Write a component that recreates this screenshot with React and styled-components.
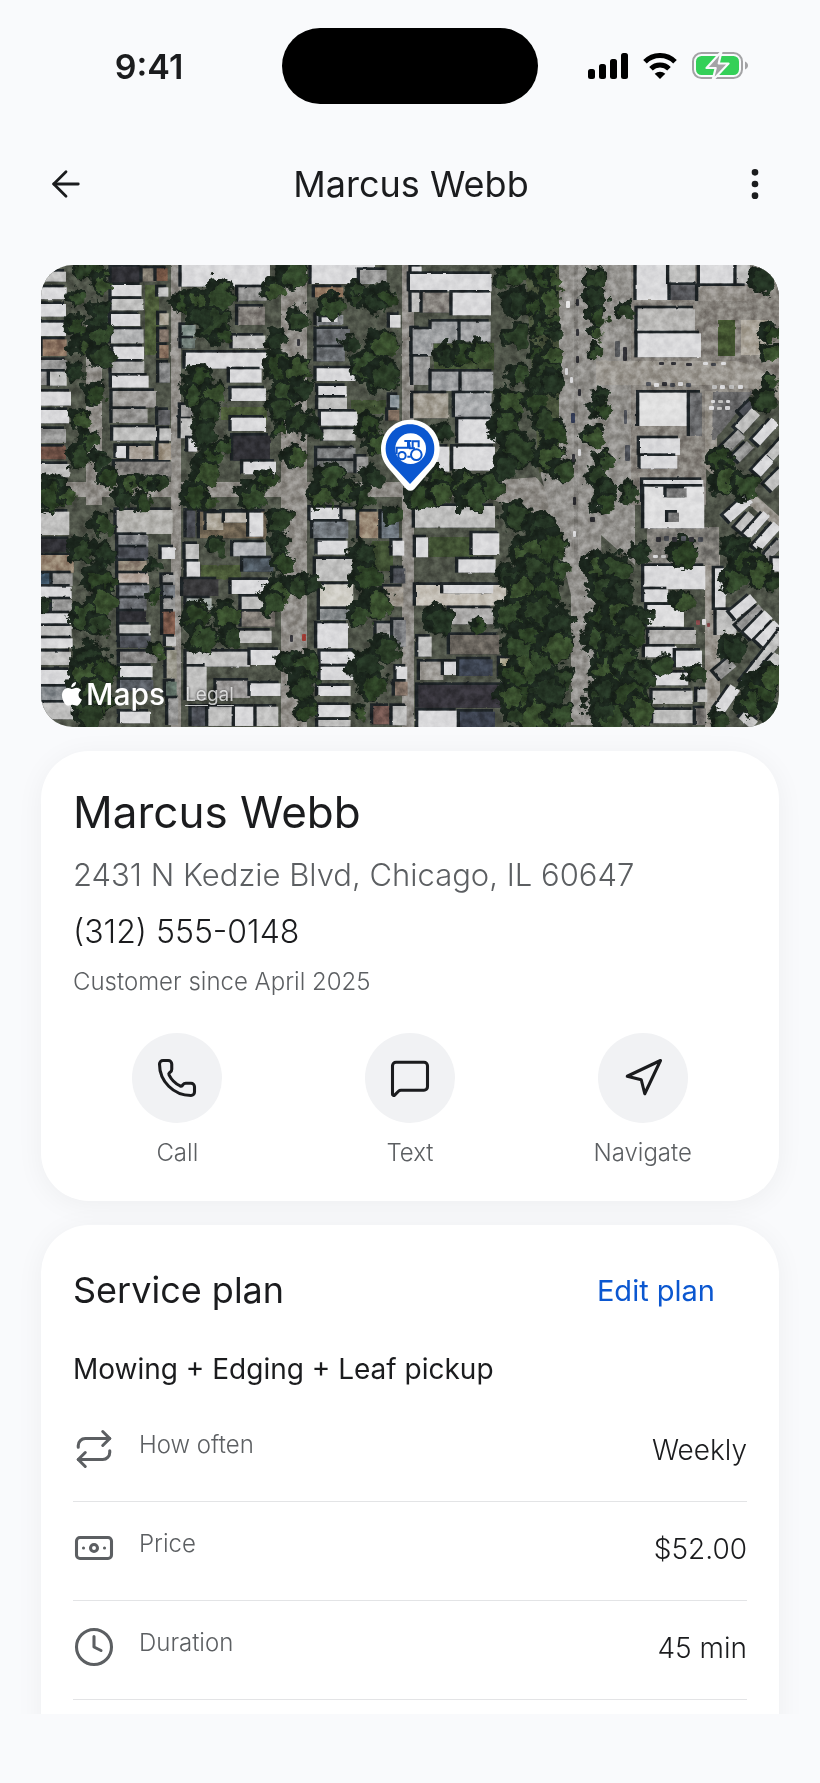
import React from "react";
import styled, { createGlobalStyle } from 'styled-components';
import { ArrowLeft, EllipsisVertical, Phone, MessageSquare, Navigation, Repeat, Banknote, Clock } from 'lucide-react';

const ACTIONS = [
    { label: 'Call', Icon: Phone },
    { label: 'Text', Icon: MessageSquare },
    { label: 'Navigate', Icon: Navigation },
];

const PLAN_ROWS = [
    { label: 'How often', value: 'Weekly', Icon: Repeat },
    { label: 'Price', value: '$52.00', Icon: Banknote },
    { label: 'Duration', value: '45 min', Icon: Clock },
];

export default function App() {
    return (
        <>
            <GlobalStyle />
            <Screen>
                <StatusBar />
                <TopBar>
                    <IconButton aria-label="Back"><ArrowLeft size={42} strokeWidth={1.6} /></IconButton>
                    <TopTitle>Marcus Webb</TopTitle>
                    <IconButton aria-label="More options"><EllipsisVertical size={40} /></IconButton>
                </TopBar>
                <Content>
                    <MapCard>
                        <SatelliteMap />
                        <MapCredits>
                            <AppleLogo viewBox="0 0 20 24" aria-hidden="true">
                                <path d="M14 0c.2 2.800-2.200 5.400-4.700 5.300C9 2.700 11.400.2 14 0zM9.900 7c1.100 0 2.500-1.300 4.600-1.300 1.900 0 3.700 1 4.700 2.500-4 2.300-3.300 7.700.7 9.300-.9 2.700-3.100 6.300-5.300 6.300-1.500 0-2.300-1-4.300-1s-2.800 1-4.200 1C3.700 23.800 0 18.700 0 13.500 0 8.600 3 5.900 6 5.900c1.700 0 3 1.100 3.900 1.100z" />
                            </AppleLogo>
                            <MapsWord>Maps</MapsWord>
                            <LegalLink href="#legal">Legal</LegalLink>
                        </MapCredits>
                    </MapCard>

                    <Card>
                        <Name>Marcus Webb</Name>
                        <Address>2431 N Kedzie Blvd, Chicago, IL 60647</Address>
                        <PhoneNumber>(312) 555-0148</PhoneNumber>
                        <Since>Customer since April 2025</Since>
                        <Actions>
                            {ACTIONS.map(({ label, Icon }) => (
                                <Action key={label}>
                                    <ActionCircle><Icon size={42} strokeWidth={1.75} /></ActionCircle>
                                    {label}
                                </Action>
                            ))}
                        </Actions>
                    </Card>

                    <PlanCard>
                        <PlanHead>
                            <PlanTitle>Service plan</PlanTitle>
                            <EditButton>Edit plan</EditButton>
                        </PlanHead>
                        <PlanName>Mowing + Edging + Leaf pickup</PlanName>
                        <PlanRows>
                            {PLAN_ROWS.map(({ label, value, Icon }) => (
                                <PlanRow key={label}>
                                    <dt><Icon size={42} strokeWidth={1.75} /><span>{label}</span></dt>
                                    <dd>{value}</dd>
                                </PlanRow>
                            ))}
                        </PlanRows>
                    </PlanCard>
                </Content>
            </Screen>
        </>
    )
}

function StatusBar() {
    return (
        <Status>
            <Time>9:41</Time>
            <Island />
            <StatusIcons>
                <svg width="40" height="26" viewBox="0 0 40 26">
                    <rect x="0" y="16" width="7" height="10" rx="2.500" />
                    <rect x="11" y="11" width="7" height="15" rx="2.500" />
                    <rect x="22" y="6" width="7" height="20" rx="2.500" />
                    <rect x="33" y="0" width="7" height="26" rx="2.500" />
                </svg>
                <svg width="34" height="26" viewBox="0 0 34 26">
                    <path d="M2 8.800a21 21 0 0 1 30 0M8 15.800a12.700 12.700 0 0 1 18 0" fill="none" stroke="#000" strokeWidth="5" />
                    <path d="M17 26l-5.300-5.300a8 8 0 0 1 10.600 0z" />
                </svg>
                <svg width="56" height="28" viewBox="0 0 56 28">
                    <rect x="1" y="1" width="49" height="25" rx="8.500" fill="none" stroke="#a3a3a5" strokeWidth="2" />
                    <rect x="4" y="4" width="43" height="19" rx="5.500" fill="#34d058" />
                    <path d="M53 9.500c4 1.500 4 6.500 0 8z" fill="#a3a3a5" />
                    <path d="M29.500-.5L14.500 16h9.200l-3.200 12.500L36.500 11.500h-9.800z" fill="#a3a3a5" stroke="#f9fafc" strokeWidth="2.200" strokeLinejoin="round" />
                </svg>
            </StatusIcons>
        </Status>
    )
}

/* Map imagery: four tiles, each drawn at three units per pixel.
   roofs: x, y, width, height, colour, rotation / trees: x, y, radius */
const W = '#d9d9db';
const L = '#bfbfbe';
const G = '#959594';
const D = '#4b4e55';
const K = '#2f2f34';
const B = '#8a7260';

const TILES = [
    {
        x: -1, y: -5,
        roofs: [
            [3,35,75,30,L],[3,82,77,36,W],[3,132,75,38,W],[3,188,75,40,W],[8,238,72,50,B],[3,300,77,30,G],[3,335,25,40,G],[30,335,50,42,L],
            [3,395,90,42,W],[3,450,85,40,W],[3,507,75,42,G],[3,560,75,38,'#6e5045'],[3,612,85,40,L],
            [215,20,90,48,K],[308,25,40,40,'#827c70'],[350,25,33,38,'#755645'],[215,75,90,34,W],[215,117,95,34,L],[213,162,88,36,W],
            [213,208,98,42,'#b0b1b2'],[220,260,92,38,W],[215,305,98,35,'#acacab'],[216,347,110,36,W],[218,393,130,50,'#9d9b98'],
            [218,447,105,42,'#91908e'],[220,502,130,40,L],[230,558,38,36,W],[268,558,72,40,'#a8a097'],[225,605,170,45,'#7c7a77'],
            [355,82,30,28,L],[358,160,28,35,'#a59f90'],[358,208,28,38,'#83756a'],[358,255,28,40,B],[358,308,32,60,'#88898a'],
            [355,450,35,45,'#5c5d60'],[358,505,35,38,L],[355,550,38,50,'#9d9384'],
            [425,12,265,68,W],[595,82,85,40,G],[595,140,80,55,'#837f7a'],[578,227,98,38,L],[437,278,253,48,W],[425,195,42,35,'#8b9893'],
            [425,235,40,30,'#6c7873'],[570,328,95,40,W],[575,385,103,38,W],[575,473,103,40,W],[580,527,110,75,K],[610,605,98,38,W],
            [422,475,35,60,L],[445,535,27,40,W],[423,435,35,35,G],
            [815,12,190,60,W],[825,82,85,30,'#8c725c'],[830,165,80,30,'#7e8184'],[845,172,48,14,W],[830,207,100,48,'#63666a'],
            [830,262,85,42,'#6c7074'],[830,325,118,38,W],[835,378,85,32,W],[835,413,86,35,L],[843,455,110,42,W],[850,508,97,34,L],
            [832,565,115,35,'#787a7b'],[832,603,115,35,'#717473'],[1050,165,32,38,W],[1050,405,28,40,'#838e94'],[1045,450,33,32,'#7f6d5f'],
            [1115,20,30,75,W],[1118,205,25,70,G],[1118,290,25,60,G],[950,590,35,50,G],[960,30,80,40,G],
        ],
        trees: [
            [150,30,35],[185,70,35],[110,115,30],[125,30,25],[180,160,40],[110,200,35],[130,255,35],[180,230,40],[185,290,40],[110,340,30],[170,400,35],
            [120,480,35],[150,540,35],[120,590,40],[180,600,30],[205,655,30],[265,670,35],[320,670,30],[360,672,30],[40,690,50],[425,130,30],
            [480,130,45],[540,110,50],[520,190,55],[480,170,40],[550,230,30],[700,90,35],[760,40,50],[780,180,35],[710,240,35],[720,320,50],[770,330,45],
            [740,400,50],[720,450,40],[790,390,40],[480,360,45],[520,400,40],[460,400,35],[500,460,45],[490,520,40],[510,590,35],[500,640,45],
            [550,560,30],[780,480,40],[820,510,35],[720,510,25],[770,590,35],[875,140,40],[950,95,35],[1010,120,45],[1040,110,35],[1030,250,50],
            [980,320,50],[1030,350,55],[930,250,25],[990,500,45],[1010,550,40],[870,660,50],[930,690,40],[1000,650,35],[680,660,30],[640,710,40],[470,710,45],
        ],
    },
    {
        x: 359, y: -5,
        roofs: [
            [30,42,245,52,W],[35,98,30,58,L],[68,98,80,60,'#837f7a'],[158,98,115,68,W],[95,185,85,65,'#9c9ea0'],[182,185,90,60,'#a2a3a5'],
            [38,208,60,80,'#9fa1a3'],[40,290,50,85,G],[95,335,90,58,'#9c9ea0'],[185,335,95,58,'#a2a3a5'],[40,400,105,75,'#a09b90'],
            [165,400,110,72,'#a8aaac'],[175,478,112,72,W],[100,560,48,75,W],[160,560,125,72,W],
            [710,12,100,108,W],[808,12,78,60,L],[812,75,80,45,'#55565a'],[900,12,105,60,W],[1010,12,40,62,L],[895,78,145,45,'#938f89'],
            [713,145,172,75,'#b8b7b5'],[713,220,190,72,W],[718,398,148,100,'#e0e0e0'],[870,398,36,130,'#666769'],
            [720,535,120,50,W],[722,588,110,38,W],[730,660,180,66,W],
            [1005,465,75,34,L,-48],[965,530,70,30,G,-45],[1055,500,85,30,W,-48],[1095,545,90,28,L,-48],[1000,560,60,30,G,-45],[1060,600,60,34,W,-48],[1095,640,70,34,L,-45],[1015,430,60,20,D,-45],
        ],
        trees: [
            [430,40,50],[460,60,30],[345,40,40],[300,65,25],[360,130,50],[410,140,40],[450,120,40],[440,190,35],[350,230,40],[465,220,25],
            [410,270,25],[455,285,35],[355,340,35],[440,340,45],[460,370,40],[410,420,40],[330,430,45],[320,500,50],[350,570,60],[320,620,40],
            [465,520,45],[450,590,50],[490,630,40],[590,60,35],[585,120,38],[595,170,30],[590,215,25],[590,270,25],[675,150,32],[1090,60,45],
            [1110,220,30],[1110,280,30],[1115,365,25],[1095,420,40],[600,410,25],[605,450,32],[580,530,35],[615,600,30],[590,650,35],[620,690,35],
            [120,660,40],[200,680,50],[270,680,50],[60,700,40],[130,520,30],[960,600,40],[980,660,50],[1040,680,45],[690,695,30],
            [140,290,35],[190,280,40],[240,275,35],[420,210,30],[430,480,35],[400,370,25],
        ],
    },
    {
        x: -1, y: 225,
        roofs: [
            [3,65,85,70,L],[3,147,88,38,K],[3,195,98,53,'#968572'],[3,250,33,38,'#3d5365'],[38,250,60,38,G],[3,290,92,34,W],[36,328,60,36,G],
            [3,370,90,32,W],[3,408,92,32,L],[3,445,95,30,W],[3,485,90,40,L],[3,540,92,42,W],[3,590,92,42,'#82878b'],[3,638,98,50,L],
            [230,60,168,72,'#b2b1ad'],[235,135,90,35,'#7f8184'],[235,172,90,38,D],[235,213,85,33,'#8b7f71'],[235,250,92,32,'#b5a89f'],
            [238,286,90,38,'#777a7f'],[238,325,82,36,'#696c71'],[238,364,80,36,K],[238,404,94,32,L],[240,438,92,35,D],[240,485,110,34,'#868584'],
            [240,528,98,34,W],[240,570,100,32,'#5a5f66'],[240,665,90,35,W],[365,172,40,35,W],[368,255,38,28,G],[370,285,35,38,'#70757b'],
            [370,325,35,35,G],[370,365,35,70,'#785648'],[378,440,30,28,L],[380,480,30,85,'#98968a'],[378,575,32,45,'#617268'],[385,625,30,80,G],
            [440,62,26,80,D],[480,65,200,80,'#6c6150'],[500,70,50,50,'#aca699'],[555,68,100,30,'#bfbab2'],[628,68,42,72,W],[437,162,40,45,L],
            [440,215,40,48,W],[580,157,98,42,'#b0b2b6'],[610,205,90,40,'#4f5962'],[430,268,105,50,'#38383a'],[575,270,115,42,W],[605,320,80,40,L],
            [440,325,75,35,'#a6aeaa'],[605,365,100,45,'#7d7872'],[595,422,100,37,L],[440,485,190,45,L],[632,480,88,45,W],[440,530,60,100,L],
            [530,572,100,52,'#9b9998'],[632,580,90,38,W],[455,650,50,58,D],[505,650,75,58,L],[585,650,60,58,W],[650,650,65,58,L],
            [812,53,95,38,W],[908,58,38,33,L],[820,95,105,50,'#70767c'],[833,152,90,42,W],[828,207,110,66,L],[840,283,100,72,'#d0cec6'],
            [840,357,98,33,'#84888a'],[832,400,92,75,W],[842,485,103,36,W],[842,530,100,40,W],[835,588,97,30,W],[835,645,97,36,W],[835,690,97,20,L],
            [958,65,58,80,'#968572'],[1025,65,52,80,'#707981'],[1058,152,35,45,W],[1010,400,50,60,G],[1060,390,38,80,'#7f8184'],[1070,530,32,38,W],
            [1065,575,38,42,'#7e6e63'],[1000,648,50,55,'#6e534d'],[1058,648,42,58,L],[1030,290,60,60,'#9b958b'],[1060,235,36,45,D],
        ],
        trees: [
            [30,20,50],[80,20,30],[185,100,35],[130,180,40],[190,190,40],[180,270,50],[190,330,45],[130,380,45],[180,400,40],[150,510,55],[190,550,50],
            [130,560,50],[170,620,60],[150,670,50],[15,345,20],[460,20,40],[510,40,25],[640,20,45],[720,90,40],[720,160,35],[725,220,35],[720,300,45],
            [700,340,40],[770,290,35],[820,280,30],[470,380,45],[560,375,45],[490,445,50],[570,445,35],[345,220,25],[340,320,25],[350,480,25],
            [795,530,50],[790,590,45],[740,510,30],[800,660,35],[845,20,40],[920,15,40],[970,20,35],[970,190,40],[980,260,50],[1010,340,50],
            [960,380,40],[1040,480,45],[980,530,50],[1000,590,45],[960,670,25],[1060,80,30],[530,165,30],[250,25,35],[310,35,30],
        ],
    },
    {
        x: 359, y: 225,
        roofs: [
            [45,48,240,65,L],[48,142,36,60,W],[218,130,80,65,W],[175,208,112,40,W],[48,285,270,62,'#c5c0b7'],[130,285,150,25,W],[150,355,130,48,'#adacab'],
            [150,435,148,58,'#6b665f'],[55,440,40,60,L],[60,515,70,55,'#9d9a95'],[132,515,45,40,W],[178,508,100,50,'#3c4350'],[55,585,265,68,'#35333a'],
            [55,662,118,50,W],[180,665,105,47,'#3a404d'],[300,505,35,55,'#b3ad98'],
            [733,-10,180,125,'#dededf'],[800,-5,60,27,'#777777'],[805,68,32,28,'#777777'],[733,228,183,70,W],[733,298,72,38,W],[742,345,110,65,'#dededf'],
            [748,420,140,42,'#b0afad'],[735,470,95,32,W],[828,482,78,50,W],[760,548,105,38,W],[758,602,120,40,L],[760,660,120,40,L],
            [888,655,30,50,'#716e6b'],[892,598,30,38,L],[945,235,32,125,W],[950,360,60,75,L],
            [970,39,90,32,W,-42],[1005,82,60,26,L,-48],[1025,92,90,26,W,-48],[1053,125,95,30,W,-48],[1085,165,75,26,G,-48],[1118,205,30,40,W],
            [990,334,80,32,W,-40],[1005,370,90,24,G,-42],[1030,388,90,34,W,-46],[1065,414,80,32,W,-46],[995,485,200,28,L,-52],[935,612,90,35,W,-55],
            [945,518,60,35,G,-40],[1020,675,50,30,L,40],[1095,500,50,34,L,-48],
        ],
        trees: [
            [60,20,45],[120,10,40],[220,20,50],[350,80,50],[430,120,55],[450,170,55],[380,190,50],[480,240,35],[400,240,50],[330,260,40],[440,300,50],
            [360,300,45],[340,380,60],[420,370,60],[480,400,50],[380,450,60],[470,470,55],[400,530,60],[480,570,45],[440,610,60],[360,620,45],
            [400,680,60],[480,680,45],[340,680,30],[120,390,50],[610,40,35],[600,230,50],[650,240,50],[610,300,50],[670,310,45],[600,390,45],
            [660,380,55],[600,450,50],[650,460,50],[720,380,40],[710,440,40],[620,540,50],[680,520,50],[720,560,50],[620,610,55],[690,620,60],
            [720,660,50],[630,680,50],[580,620,25],[720,190,35],[850,190,50],[850,335,35],[785,525,35],[888,550,30],[1010,180,50],[1040,220,55],
            [1080,250,50],[1000,270,40],[1120,280,30],[1000,480,45],[1080,600,60],[1110,560,40],[1050,640,40],[960,690,30],[1110,670,40],[230,410,25],
            [370,520,40],[350,470,45],[690,400,40],[600,660,40],[340,560,40],[330,620,40],
        ],
    },
];

const GREENS = ['#2b3f24', '#31462a', '#243424', '#374c2c', '#2a3c26'];

/* cars on the avenue and in the lots: x, y, width, height, colour */
const CARS = [
    [525,36,4,7,'#e8e8e8'],[535,34,3,7,K],[535,64,3,7,K],[535,91,3,7,K],[524,103,3,7,W],[529,112,3,6,W],[537,124,3,7,K],[530,148,4,10,'#323b55'],
    [537,184,3,7,W],[531,189,3,8,K],[532,232,3,8,K],[532,266,3,6,W],[549,252,5,5,K],[574,76,5,16,'#55575a'],[582,82,4,14,K],[583,145,3,14,D],
    [584,180,5,16,D],[618,97,5,3,K],[630,97,5,3,K],[645,98,6,3,K],[605,117,5,4,D],[613,118,5,4,W],[621,117,5,4,K],[629,118,5,4,D],[637,117,5,4,W],
    [645,118,5,4,D],[662,97,5,3,W],[670,98,5,3,D],[680,97,5,3,W],[671,120,5,4,L],[679,120,5,4,W],[688,120,5,4,L],[697,120,5,4,W],
    [670,135,4,3,W],[677,135,5,3,L],[685,135,4,3,W],[668,141,5,4,W],[676,142,5,3,L],[684,141,5,4,W],
    [615,272,5,5,K],[623,271,5,5,D],[631,272,5,5,K],[640,271,5,5,D],[648,272,5,5,K],[657,272,5,5,D],[612,290,5,3,W],[620,290,5,3,L],
    [655,355,4,5,'#8d4c4e'],[661,354,4,6,W],[666,358,3,4,'#8d4c4e'],[261,369,4,7,'#a23f37'],[249,370,3,7,K],[256,74,3,7,K],
];

function SatelliteMap() {
    return (
        <MapImage viewBox="0 0 738 462" preserveAspectRatio="xMidYMid slice" role="img" aria-label="Satellite map">
            <defs>
                <filter id="ragged" x="0" y="0" width="100%" height="100%" colorInterpolationFilters="sRGB">
                    <feTurbulence type="fractalNoise" baseFrequency="0.09" numOctaves="4" seed="4" result="noise" />
                    <feDisplacementMap in="SourceGraphic" in2="noise" scale="18" xChannelSelector="R" yChannelSelector="G" />
                    <feGaussianBlur stdDeviation="0.7" />
                </filter>
                <filter id="worn" x="0" y="0" width="100%" height="100%" colorInterpolationFilters="sRGB">
                    <feTurbulence type="fractalNoise" baseFrequency="0.15" numOctaves="2" seed="9" result="noise" />
                    <feDisplacementMap in="SourceGraphic" in2="noise" scale="2" xChannelSelector="R" yChannelSelector="G" />
                    <feGaussianBlur stdDeviation="0.6" />
                </filter>
                <filter id="grain" x="0" y="0" width="100%" height="100%" colorInterpolationFilters="sRGB">
                    <feTurbulence type="fractalNoise" baseFrequency="0.13" numOctaves="4" seed="2" />
                    <feColorMatrix values="2 0 0 0 -0.500  2 0 0 0 -0.500  2 0 0 0 -0.500  0 0 0 0 1" />
                </filter>
            </defs>
            <rect width="738" height="462" fill="#4e5348" />
            <g filter="url(#worn)">
                <g fill="#8f8c87">
                    <path d="M0 217h440l55-5 50 60-100-40H0z" />
                    <path d="M130 0h10v462h-10zM240 0h26v462h-26zM361 0h12v462h-12zM45 60h16v180H45z" />
                    <path d="M484 0h110v300l-34-30 4 190h-34V330l-30-120z" fill="#93918d" />
                    <path d="M590 0h148v130H590zM590 130h75v110h-75z" fill="#86827c" />
                    <path d="M555 96h140q30 6 43 26v14q-20-15-60-16H555z" fill="#9b9790" />
                    <path d="M664 126h12v70l62 55v14l-74-62zM664 290h15v172h-15z" fill="#99958e" />
                    <path d="M606 262h72v38h-72z" fill="#7d7b76" />
                    <path d="M700 55h30v35h-30z" fill="#a8a297" />
                </g>
                <path d="M484 0h34v200l-20 8z" fill="#465039" />
                <path d="M533 0h4v300h-4z" fill="#85837f" />
                <path d="M677 55h17v36h-17z" fill="#41522f" />
                <path d="M393 78h60v27h-60zM388 272h43v20h-43zM330 276h22v30h-22zM310 135h35v14h-35z" fill="#3f4f32" />
                <path d="M104 20h14v70h-14zM180 142h46v13h-46zM160 300h40v14h-40z" fill="#4b5a38" />
                <path d="M672 127h40l-38 48h-3z" fill="#69696a" />
            </g>
            {TILES.map((tile, i) => (
                <g key={i} filter="url(#worn)">
                    <g transform={`translate(${tile.x} ${tile.y}) scale(0.3333)`}>
                        {tile.roofs.map(([x, y, w, h, color, turn = 0], n) => (
                            <g key={n} transform={`rotate(${turn} ${x + w / 2} ${y + h / 2})`}>
                                <rect x={x - 10} y={y - 8} width={w + 4} height={h + 8} fill="#1d2326" />
                                <rect x={x} y={y} width={w} height={h} fill={color} />
                            </g>
                        ))}
                    </g>
                </g>
            ))}
            {TILES.map((tile, i) => (
                <g key={i} filter="url(#ragged)">
                    <g transform={`translate(${tile.x} ${tile.y}) scale(0.3333)`}>
                        {tile.trees.map(([x, y, r], n) => (
                            <g key={n}>
                                <circle cx={x - 5} cy={y - 3} r={r} fill="#1a251c" />
                                <circle cx={x + 5} cy={y + 3} r={r * 0.75} fill={GREENS[(n * 3) % 5]} />
                            </g>
                        ))}
                    </g>
                </g>
            ))}
            {CARS.map(([x, y, w, h, color], i) => <rect key={i} x={x} y={y} width={w} height={h} rx="1" fill={color} />)}
            <Grain width="738" height="462" filter="url(#grain)" />
            <g transform="translate(329 145) scale(0.3333)">
                <path d="M121 29c49 0 88 39 88 87 0 24-8 39-20 56l-56 65q-12 11-24 0l-56-65c-12-17-20-32-20-56 0-48 39-87 88-87z" fill="#ffffff" />
                <path d="M120 43c41 0 73 32 73 73 0 19-7 33-17 46l-56 60-56-60c-10-13-17-27-17-46 0-41 32-73 73-73z" fill="#0b57d0" />
                <circle cx="122" cy="116" r="46" fill="#ffffff" />
                <g fill="none" stroke="#0b57d0" strokeWidth="6">
                    <circle cx="96" cy="137" r="11" />
                    <circle cx="139" cy="134" r="16" />
                    <path d="M80 132v-19h34v-20M103 93h21M116 93l4 22h15M128 112v-18h18v18M112 140h10" />
                </g>
            </g>
        </MapImage>
    )
}

const GlobalStyle = createGlobalStyle`
    * {
        box-sizing: border-box;
    }

    body {
        margin: 0;
        background: #f9fafc;
        color: #1b1c1e;
        font-family: Inter, "Liberation Sans", sans-serif;
    }

    h1, h2, p, dl, dd {
        margin: 0;
        font-weight: 400;
    }

    button {
        border: 0;
        padding: 0;
        background: none;
        color: inherit;
        font: inherit;
        cursor: pointer;
    }
`;

const Screen = styled.div`
    display: flex;
    flex-direction: column;
    height: 100vh;
    padding-bottom: 69px;
`;

const Status = styled.div`
    display: grid;
    grid-template-columns: 1fr 256px 1fr;
    align-items: center;
    flex: none;
    height: 132px;
`;

const Time = styled.span`
    padding-left: 16px;
    text-align: center;
    font-size: 34px;
    font-weight: 600;
`;

const Island = styled.div`
    height: 76px;
    border-radius: 38px;
    background: #000;
`;

const StatusIcons = styled.div`
    display: flex;
    align-items: center;
    justify-content: flex-end;
    gap: 15px;
    padding-right: 72px;
`;

const TopBar = styled.header`
    display: flex;
    align-items: center;
    justify-content: space-between;
    flex: none;
    height: 104px;
    padding: 0 45px;
`;

const TopTitle = styled.h1`
    font-size: 36px;
`;

const IconButton = styled.button`
    display: flex;
`;

const Content = styled.main`
    display: flex;
    flex-direction: column;
    flex: 1;
    min-height: 0;
    gap: 24px;
    padding: 29px 41px 0;
    overflow: hidden;
`;

const MapCard = styled.div`
    position: relative;
    flex: none;
    border-radius: 32px;
    overflow: hidden;
`;

const MapImage = styled.svg`
    display: block;
    width: 100%;
`;

const Grain = styled.rect`
    mix-blend-mode: overlay;
    opacity: 0.22;
`;

const MapCredits = styled.div`
    position: absolute;
    left: 21px;
    bottom: 15px;
    display: flex;
    align-items: center;
    color: #fff;
`;

const AppleLogo = styled.svg`
    width: 20px;
    height: 24px;
    margin-right: 4px;
    fill: #fff;
`;

const MapsWord = styled.span`
    font-size: 30px;
    line-height: 36px;
    font-weight: 500;
`;

const LegalLink = styled.a`
    margin-left: 20px;
    color: rgba(255, 255, 255, 0.75);
    font-size: 19px;
    text-underline-offset: 4px;
    text-shadow: 0 0 3px rgba(0, 0, 0, 0.8);
`;

const Card = styled.section`
    flex: none;
    padding: 32px;
    border-radius: 48px;
    background: #fff;
    box-shadow: 0 4px 28px rgba(0, 0, 0, 0.05);
`;

/* the plan goes on below the fold */
const PlanCard = styled(Card)`
    padding-bottom: 120px;
`;

const Name = styled.h2`
    font-size: 44px;
    line-height: 58px;
`;

const Address = styled.p`
    margin-top: 12px;
    color: #5c5f62;
    font-size: 31px;
    line-height: 44px;
    font-weight: 300;
`;

const PhoneNumber = styled(Address)`
    margin-top: 13px;
    color: #1b1c1e;
    font-size: 32px;
`;

const Since = styled(Address)`
    font-size: 24px;
    line-height: 32px;
`;

const Actions = styled.div`
    display: grid;
    grid-template-columns: repeat(3, 1fr);
    gap: 24px;
    margin-top: 35px;
`;

const Action = styled.button`
    display: flex;
    flex-direction: column;
    align-items: center;
    gap: 14px;
    && {
        color: #5c5f62;
        font-size: 24px;
        line-height: 32px;
        font-weight: 300;
    }
`;

const ActionCircle = styled.span`
    display: flex;
    align-items: center;
    justify-content: center;
    width: 90px;
    height: 90px;
    border-radius: 50%;
    background: #f1f2f4;
    color: #1b1c1e;
`;

const PlanHead = styled.div`
    display: flex;
    align-items: center;
    justify-content: space-between;
    height: 66px;
    margin-bottom: 27px;
`;

const PlanTitle = styled.h2`
    font-size: 36px;
`;

const EditButton = styled.button`
    && {
        height: 66px;
        padding: 0 32px;
        color: #0b57d0;
        font-size: 29px;
    }
`;

const PlanName = styled.p`
    font-size: 28px;
    line-height: 38px;
`;

const PlanRows = styled.dl`
    margin-top: 15px;
`;

const PlanRow = styled.div`
    display: flex;
    justify-content: space-between;
    padding: 25px 0 29px;
    border-bottom: 1px solid #e3e4e6;

    dt {
        display: flex;
        gap: 24px;
        color: #5c5f62;
        font-size: 24px;
        line-height: 34px;
        font-weight: 300;
    }

    dd {
        font-size: 28px;
        line-height: 44px;
        font-weight: 300;
    }
`;
